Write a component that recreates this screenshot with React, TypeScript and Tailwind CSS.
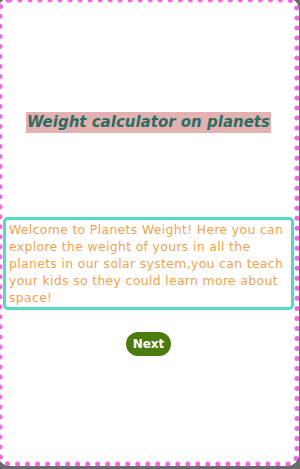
export default function App() {
  return (
    <div className="h-[469px] w-[300px] overflow-hidden bg-[#6b6b6b]">
      <div className="-ml-[2px] -mt-[2px] flex h-[468px] w-[301px] flex-col items-center rounded-[12px] border-[5px] border-dotted border-[#f566e6] bg-white pt-[109px] font-['DejaVu_Sans',sans-serif]">
        <h1 className="bg-[#e3b1b1] px-[1px] text-[15px] font-bold italic leading-[21px] text-[#2b6e62]">
          Weight calculator on planets
        </h1>
        <p className="mt-[84px] w-[291px] rounded-[5px] border-[3px] border-[#4fdcbf] px-[3px] py-[1px] text-[12.4px] leading-[17px] tracking-[0.35px] text-[#f2a24e]">
          Welcome to Planets Weight! Here you can explore the weight of yours in all the planets in our solar system,you can teach your kids so they could learn more about space!
        </p>
        <button className="mt-[22px] h-[24px] rounded-full bg-[#4b7a0e] px-[7px] text-[12px] font-bold text-white">
          Next
        </button>
      </div>
    </div>
  )
}
